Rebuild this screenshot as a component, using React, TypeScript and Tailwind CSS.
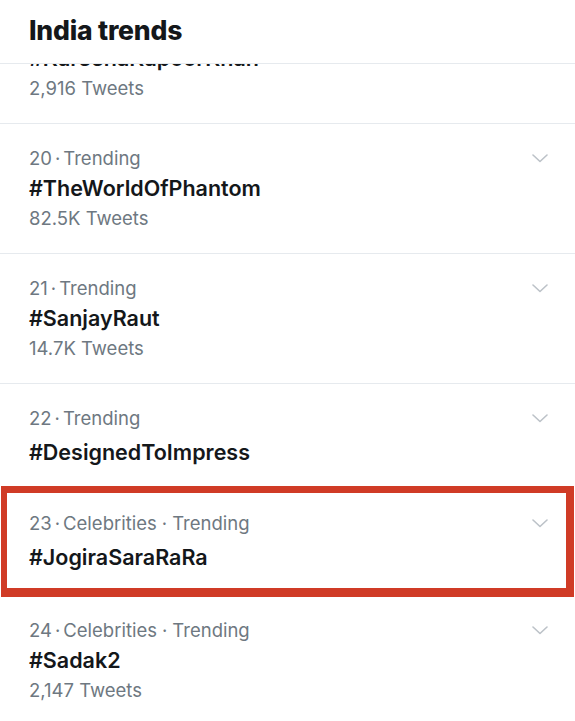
import React from "react";

type Trend = {
  rank: number;
  category?: string;
  tag: string;
  count?: string;
};

const trends: Trend[] = [
  { rank: 20, tag: "#TheWorldOfPhantom", count: "82.5K Tweets" },
  { rank: 21, tag: "#SanjayRaut", count: "14.7K Tweets" },
  { rank: 22, tag: "#DesignedToImpress" },
];

const Chevron = () => (
  <svg width="16" height="9" viewBox="0 0 16 9" fill="none" className="mt-[11px] shrink-0">
    <polyline points="1,1 8,7.5 15,1" stroke="#bcc2c8" strokeWidth="1.6" strokeLinejoin="round" strokeLinecap="round" />
  </svg>
);

function Meta({ rank, category }: { rank: number; category?: string }) {
  return (
    <div className="text-[18.5px] leading-[30px] text-[#6e7881]">
      {rank}
      <span className="mx-[3px]">·</span>
      {category ? (
        <>
          {category}
          <span className="mx-[5px]">·</span>
        </>
      ) : null}
      Trending
    </div>
  );
}

function Row({ t }: { t: Trend }) {
  return (
    <div
      className={`flex justify-between border-t border-[#e6eaee] pl-[29px] pr-[27px] pt-[19px] ${
        t.count ? "pb-[20px]" : "pb-[19px]"
      }`}
    >
      <div>
        <Meta rank={t.rank} category={t.category} />
        <div className={`text-[21.5px] leading-[30px] font-semibold text-[#14171a] ${t.count ? "" : "mt-1"}`}>
          {t.tag}
        </div>
        {t.count && <div className="text-[18.5px] leading-[30px] text-[#6e7881]">{t.count}</div>}
      </div>
      <Chevron />
    </div>
  );
}

export default function App() {
  return (
    <div className="w-[575px] h-[721px] overflow-hidden bg-white font-['Inter','Liberation_Sans',sans-serif]">
      {/* sticky header */}
      <div className="relative z-10 h-[64px] bg-white border-b border-[#e6eaee] pl-[29px] pt-[13px]">
        <h1 className="text-[26.5px] leading-[34px] font-extrabold text-[#14171a] tracking-[-0.2px]">India trends</h1>
      </div>

      <div className="overflow-hidden">
        {/* partly scrolled row under the header */}
        <div className="-mt-[21px] pl-[29px] pb-[20px]">
          <div className="text-[21.5px] leading-[30px] font-semibold text-[#14171a]">#KareenaKapoorKhan</div>
          <div className="text-[18.5px] leading-[30px] text-[#6e7881]">2,916 Tweets</div>
        </div>

        {trends.map((t) => (
          <Row key={t.rank} t={t} />
        ))}

        {/* highlighted trend */}
        <div className="ml-px mr-px flex justify-between border-[#d03b26] border-t-[7px] border-b-[9px] border-l-[6px] border-r-[8px] pl-[22px] pr-[18px] pt-[15px] pb-[16px]">
          <div>
            <Meta rank={23} category="Celebrities" />
            <div className="mt-1 text-[21.5px] leading-[30px] font-semibold text-[#14171a]">#JogiraSaraRaRa</div>
          </div>
          <Chevron />
        </div>

        <div className="flex justify-between pl-[29px] pr-[27px] pt-[18px] pb-[20px]">
          <div>
            <Meta rank={24} category="Celebrities" />
            <div className="text-[21.5px] leading-[30px] font-semibold text-[#14171a]">#Sadak2</div>
            <div className="text-[18.5px] leading-[30px] text-[#6e7881]">2,147 Tweets</div>
          </div>
          <Chevron />
        </div>
      </div>
    </div>
  );
}
